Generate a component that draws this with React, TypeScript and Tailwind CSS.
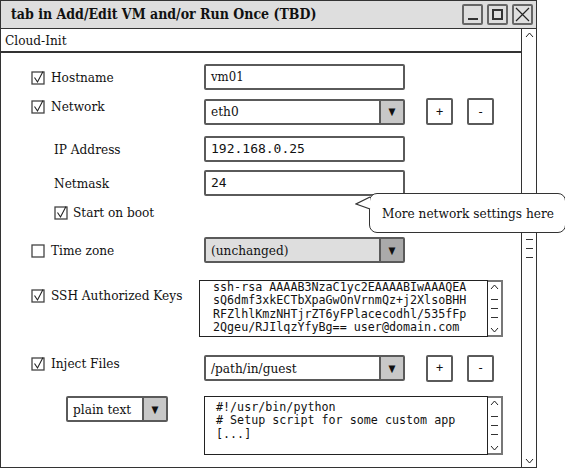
import React from "react";

const serif = "font-['DejaVu_Serif_Condensed','DejaVu_Serif',serif]";
const mono = "font-['DejaVu_Sans_Mono',monospace]";

function Check({ checked = true }: { checked?: boolean }) {
  return (
    <svg width="15" height="15" viewBox="0 0 15 15" className="shrink-0">
      <rect x="1" y="2" width="12" height="12" fill="white" stroke="#444" strokeWidth="1.3" />
      {checked && <path d="M3.5 7.5 L6.5 12 L12 1.5" fill="none" stroke="#222" strokeWidth="1.1" />}
    </svg>
  );
}

function Chevron({ up }: { up?: boolean }) {
  return (
    <svg width="9" height="6" viewBox="0 0 9 6">
      <path d={up ? "M1 5 L4.5 1 L8 5" : "M1 1 L4.5 5 L8 1"} fill="none" stroke="#222" strokeWidth="1" />
    </svg>
  );
}

function Dashes() {
  return (
    <div className="flex flex-col gap-[8px]">
      <div className="w-[7px] h-px bg-[#333]" />
      <div className="w-[7px] h-px bg-[#333]" />
      <div className="w-[7px] h-px bg-[#333]" />
    </div>
  );
}

function Input({ value, isMono }: { value: string; isMono?: boolean }) {
  return (
    <div
      className={`w-[201px] h-[26px] border-2 border-[#5a5a5a] rounded-[2px] bg-white flex items-center pl-[5px] text-[13px] text-[#111] ${
        isMono ? mono : serif
      }`}
    >
      {value}
    </div>
  );
}

function Select({ value, w = 201, gray }: { value: string; w?: number; gray?: boolean }) {
  return (
    <div
      className={`h-[26px] border-2 border-[#5a5a5a] rounded-[2px] flex items-stretch text-[13.5px] text-[#111] ${serif} ${
        gray ? "bg-[#dedede]" : "bg-white"
      }`}
      style={{ width: w }}
    >
      <div className="flex-1 flex items-center pl-[5px]">{value}</div>
      <div
        className={`w-[24px] border-l-2 border-[#5a5a5a] flex items-center justify-center text-[10px] ${
          gray ? "bg-[#aaaaaa]" : "bg-[#c8c8c8]"
        }`}
      >
        ▼
      </div>
    </div>
  );
}

function SmallBtn({ label }: { label: string }) {
  return (
    <div
      className={`w-[27px] h-[27px] border-2 border-[#5a5a5a] rounded-[2px] bg-white flex items-center justify-center text-[12px] text-[#111] ${mono}`}
    >
      {label}
    </div>
  );
}

function TextArea({ lines, w, h, pl, pt }: { lines: string[]; w: number; h: number; pl: number; pt: number }) {
  return (
    <div className="flex" style={{ height: h }}>
      <div
        className={`border-[1.5px] border-[#222] bg-white text-[11.7px] leading-[13.3px] text-[#111] whitespace-pre ${mono}`}
        style={{ width: w, paddingLeft: pl, paddingTop: pt }}
      >
        {lines.map((l) => (
          <div key={l}>{l}</div>
        ))}
      </div>
      <div className="w-[15px] border-2 border-l-0 border-[#777] flex flex-col items-center justify-between py-[2px]">
        <Chevron up />
        <Dashes />
        <Chevron />
      </div>
    </div>
  );
}

function Label({ children }: { children: React.ReactNode }) {
  return <span className={`text-[13.5px] leading-[16px] text-[#111] ${serif}`}>{children}</span>;
}

export default function App() {
  return (
    <div className="w-[565px] h-[469px] bg-white relative overflow-hidden">
      <div className="w-[537px] h-[468px] border border-[#333] flex flex-col">
        {/* Title bar */}
        <div className="h-[28px] shrink-0 border-b border-[#333] bg-[#dedede] flex items-center pl-[10px] pr-[3px]">
          <span className={`text-[14px] font-bold text-[#111] ${serif}`}>
            tab in Add/Edit VM and/or Run Once (TBD)
          </span>
          <div className="ml-auto flex gap-[4px]">
            <div className="w-[21px] h-[21px] border-2 border-[#666] rounded-[2px] flex items-end justify-center pb-[3px]">
              <div className="w-[10px] h-[2px] bg-[#333]" />
            </div>
            <div className="w-[21px] h-[21px] border-2 border-[#666] rounded-[2px] flex items-center justify-center">
              <div className="w-[11px] h-[11px] border-2 border-[#333]" />
            </div>
            <div className="w-[21px] h-[21px] border-2 border-[#666] rounded-[2px] flex items-center justify-center">
              <svg width="15" height="15" viewBox="0 0 15 15">
                <path d="M1 1 L14 14 M14 1 L1 14" stroke="#222" strokeWidth="1.2" />
              </svg>
            </div>
          </div>
        </div>

        {/* Body */}
        <div className="flex-1 flex min-h-0">
          <div className="flex-1 flex flex-col">
            <div className="h-[24px] shrink-0 border-b-2 border-[#333] flex items-center pl-[4px]">
              <Label>Cloud-Init</Label>
            </div>

            {/* Hostname */}
            <div className="flex items-center h-[26px] mt-[11px]">
              <div className="w-[203px] pl-[30px] flex items-center gap-[5px]">
                <Check />
                <Label>Hostname</Label>
              </div>
              <Input value="vm01" />
            </div>

            {/* Network */}
            <div className="flex items-center h-[27px] mt-[8px]">
              <div className="w-[203px] pl-[30px] flex items-center gap-[5px] self-start">
                <Check />
                <Label>Network</Label>
              </div>
              <Select value="eth0" />
              <div className="ml-[21px]">
                <SmallBtn label="+" />
              </div>
              <div className="ml-[14px]">
                <SmallBtn label="-" />
              </div>
            </div>

            {/* IP Address */}
            <div className="flex items-center h-[26px] mt-[11px]">
              <div className="w-[203px] pl-[53px] pb-[2px]">
                <Label>IP Address</Label>
              </div>
              <Input value="192.168.0.25" isMono />
            </div>

            {/* Netmask */}
            <div className="flex items-center h-[26px] mt-[8px]">
              <div className="w-[203px] pl-[53px] pb-[2px]">
                <Label>Netmask</Label>
              </div>
              <Input value="24" isMono />
            </div>

            {/* Start on boot */}
            <div className="flex items-center h-[26px] mt-[2px]">
              <div className="w-[203px] pl-[53px] pt-[2px] flex items-center gap-[4px]">
                <Check />
                <Label>Start on boot</Label>
              </div>
            </div>

            {/* Time zone */}
            <div className="flex items-center h-[26px] mt-[13px]">
              <div className="w-[203px] pl-[30px] flex items-center gap-[5px]">
                <Check checked={false} />
                <Label>Time zone</Label>
              </div>
              <Select value="(unchanged)" gray />
            </div>

            {/* SSH keys */}
            <div className="flex items-start h-[57px] mt-[17px]">
              <div className="w-[198px] pl-[30px] pt-[7px] flex items-center gap-[5px]">
                <Check />
                <Label>SSH Authorized Keys</Label>
              </div>
              <TextArea
                w={289}
                h={57}
                pl={13}
                pt={0}
                lines={[
                  "ssh-rsa AAAAB3NzaC1yc2EAAAABIwAAAQEA",
                  "sQ6dmf3xkECTbXpaGwOnVrnmQz+j2XlsoBHH",
                  "RFZlhlKmzNHTjrZT6yFPlacecodhl/535fFp",
                  "2Qgeu/RJIlqzYfyBg== user@domain.com",
                ]}
              />
            </div>

            {/* Inject files */}
            <div className="flex items-center h-[26px] mt-[18px]">
              <div className="w-[203px] pl-[30px] flex items-center gap-[5px] self-start">
                <Check />
                <Label>Inject Files</Label>
              </div>
              <Select value="/path/in/guest" />
              <div className="ml-[21px]">
                <SmallBtn label="+" />
              </div>
              <div className="ml-[14px]">
                <SmallBtn label="-" />
              </div>
            </div>

            {/* File content */}
            <div className="flex items-start h-[59px] mt-[15px]">
              <div className="w-[203px] pl-[65px]">
                <Select value="plain text" w={102} />
              </div>
              <TextArea
                w={284}
                h={59}
                pl={11}
                pt={4}
                lines={["#!/usr/bin/python", "# Setup script for some custom app", "[...]"]}
              />
            </div>
          </div>

          {/* Window scrollbar */}
          <div className="w-[15px] shrink-0 border-l border-[#333] flex flex-col items-center pt-[3px] pb-[3px]">
            <Chevron up />
            <div className="mt-[201px]">
              <Dashes />
            </div>
            <div className="mt-auto">
              <Chevron />
            </div>
          </div>
        </div>
      </div>

      {/* Callout */}
      <div className="absolute left-[353px] top-[193px] flex">
        <svg width="16" height="20" viewBox="0 0 16 20" className="relative left-[2px] z-10">
          <path d="M15 4 L1 11 L15 16" fill="white" stroke="#333" strokeWidth="1.3" />
        </svg>
        <div
          className={`w-[197px] h-[40px] border-[1.5px] border-[#333] rounded-[8px] bg-white flex items-center pl-[12px] text-[13.5px] text-[#111] ${serif}`}
        >
          More network settings here
        </div>
      </div>
    </div>
  );
}
